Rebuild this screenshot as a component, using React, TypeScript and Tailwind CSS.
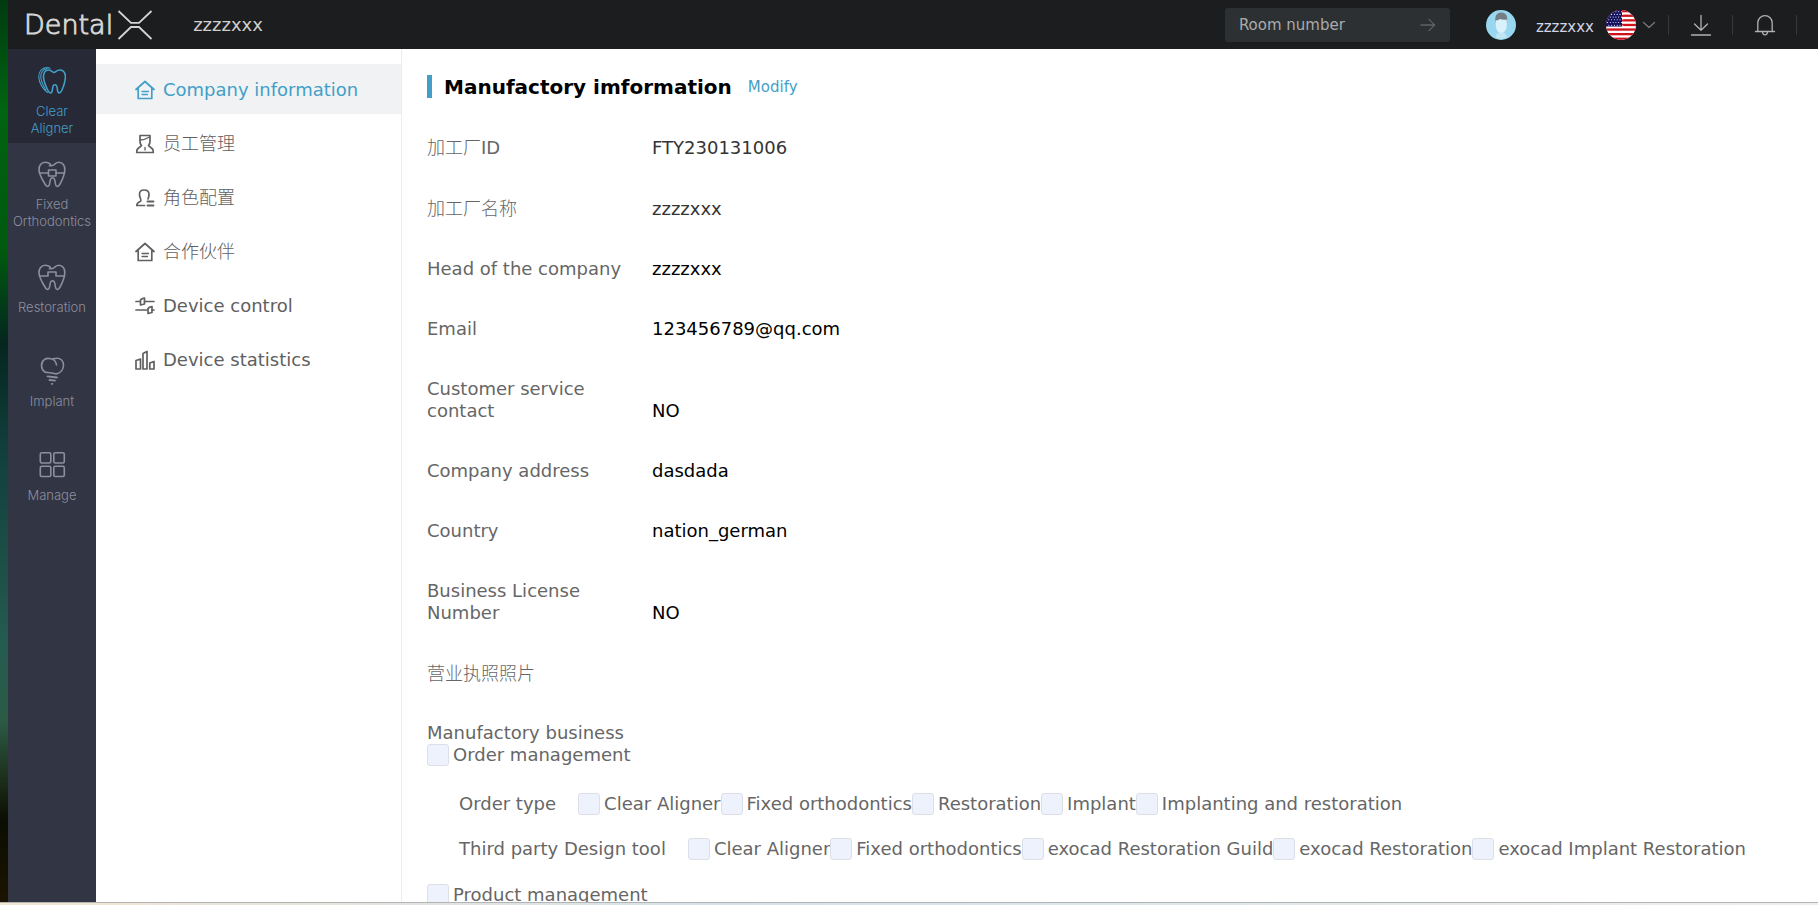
import type { ReactNode } from 'react';
import clsx from 'clsx';

const TOOTH =
  'M11.5 5.6c1.6.4 3 .2 4.300-.8C17.300 3.400 18.800 2.300 20.800 2.300c4 0 6.200 3.400 6 7.700-.3 5-2.300 9.400-4.300 13.200-1 2-1.900 3.300-3.200 3.300-1.700 0-1.900-2-2.100-4.200-.3-2.500-.9-4.500-2.700-4.500s-2.400 2-2.700 4.500c-.2 2.200-.4 4.200-2.100 4.200-1.300 0-2.200-1.300-3.200-3.300C4.300 19.400 1.300 15 1 10 .8 5.700 3.200 2.300 7.200 2.300c2.300 0 3.900.8 5.200 1.900';

function LineIcon({ size, view, children, width = 1.7 }: { size: string; view: string; children: ReactNode; width?: number }) {
  return (
    <svg
      className={size}
      viewBox={view}
      fill="none"
      stroke="currentColor"
      strokeWidth={width}
      strokeLinecap="round"
      strokeLinejoin="round"
      aria-hidden="true"
    >
      {children}
    </svg>
  );
}

const modules: { label: string; active?: boolean; icon: ReactNode }[] = [
  {
    label: 'Clear Aligner',
    active: true,
    icon: (
      <>
        <path d="M16 5.500c1.500-.4 3-2.500 6-2.500 3.600 0 5.600 3.300 5.400 7.300-.2 4.700-1.800 9-3.400 12.700-.9 2-1.700 3-2.800 3-1.600 0-1.700-1.900-1.900-4-.2-2.400-.7-4.200-2.400-4.200s-2.200 1.800-2.400 4.200c-.2 2.100-.3 4-1.900 4-1.100 0-2-1-2.900-3C8 19.500 5.700 15 5.500 10.300 5.300 6.300 7 3 10.500 3c2.500 0 3.500 2 5.500 2.500z" />
        <path d="M7.500 22.500C5.500 18.500 3 15 2.800 10.300 2.600 5.500 5 2.500 9 1.800" strokeWidth="1.100" />
        <path d="M9.500 25.500C5.500 22.500 1 16.500.8 10.300.6 4.500 3.800.8 9 .6c1.200 0 2 .2 3 .6" strokeWidth="1.100" />
      </>
    ),
  },
  {
    label: 'Fixed Orthodontics',
    icon: (
      <>
        <path d={TOOTH} />
        <rect x="10.500" y="10" width="7.500" height="6" />
        <path d="M1.500 13h9M18 13h8.500" />
      </>
    ),
  },
  {
    label: 'Restoration',
    icon: (
      <>
        <path d={TOOTH} />
        <path d="M1.500 13H10V9h8v4h8.500" />
      </>
    ),
  },
  {
    label: 'Implant',
    icon: (
      <>
        <path d="M12.500 1.800C8 .2 3.500 3.500 3.500 8.500c0 2.800 1.500 5 3.500 6.600 3.500.5 8 .9 11.500 1.800 4.500-1 7-5 7-9 0-4.500-3.500-7-7-6.600-2.200.2-3.500 1-6 .5 2.800.4 5.500 2.700 6 6.200" />
        <path d="M9.500 19.300l9.500 1.200M11.500 23l5.500.6M13.800 26.800h.6" strokeWidth="1.800" />
      </>
    ),
  },
  {
    label: 'Manage',
    icon: (
      <>
        <rect x="2.300" y="1.800" width="10.500" height="10.200" rx="1.500" />
        <rect x="15.800" y="1.800" width="10.500" height="10.200" rx="1.500" />
        <rect x="2.300" y="15.300" width="10.500" height="10.200" rx="1.500" />
        <rect x="15.800" y="15.300" width="10.500" height="10.200" rx="1.500" />
      </>
    ),
  },
];

const house = (
  <>
    <path d="M1 9.500L10 1.500l9 8M3.200 8.500v10h13.600v-10" />
    <path d="M7 11.500h6.500M7 14.500h5.500" strokeWidth="1.300" />
  </>
);

const menu: { label: string; active?: boolean; cjk?: boolean; icon: ReactNode }[] = [
  { label: 'Company information', active: true, icon: house },
  {
    label: '员工管理',
    cjk: true,
    icon: (
      <>
        <path d="M5 1.500h10v6c0 2-.8 3-1.500 4.200L17.500 15c.6.500.8 1.500.8 3.500H1.700c0-2 .2-3 .8-3.500l4-3.300C5.800 10.500 5 9.500 5 7.500z" />
        <path d="M5 6c3 0 6-.8 9.500-3M10 13.500v2.500" strokeWidth="1.300" />
      </>
    ),
  },
  {
    label: '角色配置',
    cjk: true,
    icon: (
      <>
        <path d="M9.500 17.500H1.800c0-2 .5-3 3.400-4 1.300-.6.800-1.500.3-3C4.800 9 4.500 8 4.500 6.500c0-3 1-4.500 4.700-4.500S14 3.500 14 6.500c0 2-.5 3-1 4.500" />
        <path d="M12.500 13.500h6M12.500 17.500h6" strokeWidth="1.800" />
      </>
    ),
  },
  { label: '合作伙伴', cjk: true, icon: house },
  {
    label: 'Device control',
    icon: (
      <>
        <path d="M1 5.500h4M9.500 5.500h9.500M1 14h11M17 14h2" />
        <path d="M7.500 2.500L9.500 2v6l-4 1V4zM15 11l2-.5v6l-4 1v-5z" />
      </>
    ),
  },
  {
    label: 'Device statistics',
    icon: <path d="M1 10.500l4.500-1.500v10H1zM8 3.500l4-2V19H8zM14.800 13l4.200-1.500V19h-4.200z" />,
  },
];

const details: { label: string; value?: string; cjk?: boolean; soft?: boolean }[] = [
  { label: '加工厂ID', value: 'FTY230131006', cjk: true, soft: true },
  { label: '加工厂名称', value: 'zzzzxxx', cjk: true, soft: true },
  { label: 'Head of the company', value: 'zzzzxxx' },
  { label: 'Email', value: '123456789@qq.com' },
  { label: 'Customer service contact', value: 'NO' },
  { label: 'Company address', value: 'dasdada' },
  { label: 'Country', value: 'nation_german' },
  { label: 'Business License Number', value: 'NO' },
  { label: '营业执照照片', cjk: true },
];

const groups = [
  {
    title: 'Order type',
    options: ['Clear Aligner', 'Fixed orthodontics', 'Restoration', 'Implant', 'Implanting and restoration'],
  },
  {
    title: 'Third party Design tool',
    options: [
      'Clear Aligner',
      'Fixed orthodontics',
      'exocad Restoration Guild',
      'exocad Restoration',
      'exocad Implant Restoration',
    ],
  },
];

function Check({ label }: { label: string }) {
  return (
    <label className="flex shrink-0 items-center gap-1 whitespace-nowrap">
      <input
        type="checkbox"
        className="size-[22px] shrink-0 appearance-none rounded-[3px] border border-[#dcdfe6] bg-[#edf2fc] checked:bg-[#439fc8]"
      />
      {label}
    </label>
  );
}

function Logo() {
  return (
    <a href="#home" aria-label="DentalX" className="flex items-center gap-1 text-[#d4d4d4]">
      <span className="text-[27px] leading-[30px] font-extralight [-webkit-text-stroke:1px]">Dental</span>
      <svg className="h-[30px] w-[36px]" viewBox="0 0 36 30" fill="none" stroke="currentColor" strokeWidth="1.800" aria-hidden="true">
        <path d="M1.500 1l12.500 11.800h8L34.500 1M1.500 29L14 17h8L34.500 29" />
      </svg>
    </a>
  );
}

function Avatar() {
  return (
    <svg className="size-[30px] shrink-0" viewBox="0 0 30 30" role="img" aria-label="Avatar">
      <circle cx="15" cy="15" r="15" fill="#98d7ef" />
      <path d="M9.500 27.800c.3-3 1.500-4.300 3.500-5.300h4.500c2 1 3 2.300 3.300 5.300a15 15 0 0 1-11.300 0z" fill="#bfe5f3" />
      <path d="M9.300 9.500c0-5 2.500-7 6-7s6 2 6 7l-.6 3.500H9.900z" fill="#737f84" />
      <path d="M9.800 10.500c2 0 3-.8 4-1.500 2 .8 4.500.8 7 .5v6c0 4-2.500 7.500-5.500 7.500s-5.500-3.500-5.500-7.500z" fill="#d9f1fb" />
    </svg>
  );
}

function Flag() {
  const stripes = [0, 1, 2, 3, 4, 5, 6];
  const stars = [0, 1, 2, 3, 4, 5];
  return (
    <svg className="size-[30px]" viewBox="0 0 30 30" role="img" aria-label="United States">
      <defs>
        <clipPath id="flag-round">
          <circle cx="15" cy="15" r="15" />
        </clipPath>
      </defs>
      <g clipPath="url(#flag-round)">
        <rect width="30" height="30" fill="#fff" />
        {stripes.map((i) => (
          <rect key={i} y={i * 4.6} width="30" height="2.300" fill="#d0101b" />
        ))}
        <rect width="16" height="16.500" fill="#13125f" />
        {stars.map((r) =>
          stars.map((c) => <circle key={`${r}-${c}`} cx={1.5 + c * 2.8 + (r % 2) * 1.3} cy={1.7 + r * 2.7} r="0.550" fill="#fff" />),
        )}
      </g>
    </svg>
  );
}

export default function App() {
  return (
    <div className="flex h-screen flex-col overflow-hidden bg-white font-['DejaVu_Sans','Noto_Sans_CJK_SC',sans-serif] text-[18px] leading-[22px]">
      <div className="flex min-h-0 flex-1">
        <div className="w-2 shrink-0 bg-linear-[180deg,#003a10_0%,#006411_12%,#00590f_28%,#04261f_38%,#123f3c_50%,#255c50_72%,#2b5a45_80%,#1b2a16_87%,#0b0d02_91%,#1b1400_100%]" />
        <div className="flex min-w-0 flex-1 flex-col">
          <header className="flex h-[49px] shrink-0 items-center bg-[#1c1d1e] pr-[21px] pl-4">
            <Logo />
            <span className="ml-10 text-[#cfcfcf]">zzzzxxx</span>
            <form className="mr-9 ml-auto flex h-[34px] w-[225px] items-center rounded-[3px] bg-[#2d3032] px-3.5">
              <input
                type="text"
                aria-label="Room number"
                placeholder="Room number"
                className="min-w-0 flex-1 bg-transparent text-[15px] text-white outline-none placeholder:text-[#a9abac]"
              />
              <button type="button" aria-label="Enter room" className="text-[#7a7c7e]">
                <LineIcon size="size-4" view="0 0 18 18" width={1.1}>
                  <path d="M1 9h15M10 2.500L16.300 9 10 15.500" />
                </LineIcon>
              </button>
            </form>
            <div className="flex items-center">
              <Avatar />
              <span className="mr-3 ml-5 pt-1 text-[15px] text-[#d3d4e6]">zzzzxxx</span>
              <button type="button" aria-label="Language" className="flex items-center gap-1.5 text-[#7a7c7e]">
                <Flag />
                <LineIcon size="size-3.5" view="0 0 14 14" width={1.2}>
                  <path d="M1.500 4.500L7 9.500l5.500-5" />
                </LineIcon>
              </button>
            </div>
            <div className="ml-3 flex h-5 items-center text-[#b0b1b2]">
              <span className="h-full w-px bg-[#36383a]" />
              <button type="button" aria-label="Download" className="flex w-[63px] justify-center">
                <LineIcon size="size-[22px]" view="0 0 22 22" width={1.3}>
                  <path d="M11 1.500v14.500M4.500 10L11 16.300 17.500 10M1.500 21h19" />
                </LineIcon>
              </button>
              <span className="h-full w-px bg-[#36383a]" />
              <button type="button" aria-label="Notifications" className="flex w-[63px] justify-center">
                <LineIcon size="size-[22px]" view="0 0 22 22" width={1.3}>
                  <path d="M1.500 17.500h19M3.800 17.500V8.800a7.200 7.200 0 0 1 14.400 0v8.700M8.500 18c.3 3.800 4.700 3.800 5 0" />
                </LineIcon>
              </button>
              <span className="h-full w-px bg-[#36383a]" />
            </div>
          </header>

          <div className="flex min-h-0 flex-1">
            <nav aria-label="Modules" className="flex w-[88px] shrink-0 flex-col bg-[#323544] font-[Inter,sans-serif] text-[13px] leading-[17px] font-light">
              {modules.map((m) => (
                <a
                  key={m.label}
                  href="#module"
                  className={clsx(
                    'flex h-[94px] shrink-0 flex-col items-center justify-center gap-2 px-1 text-center',
                    m.active ? 'bg-[#272a36] pt-3 text-[#439fc8]' : 'pt-2.5 text-[#8c8f9e]',
                  )}
                >
                  <LineIcon size="size-7" view="0 0 28 28" width={1.6}>
                    {m.icon}
                  </LineIcon>
                  <span className={m.active ? 'w-14' : undefined}>{m.label}</span>
                </a>
              ))}
            </nav>

            <nav aria-label="Settings" className="flex w-[306px] shrink-0 flex-col gap-1 border-r border-[#ececee] pt-[15px]">
              {menu.map((m) => (
                <a
                  key={m.label}
                  href="#settings"
                  className={clsx(
                    'flex h-[50px] items-center gap-2 pt-px pl-[39px]',
                    m.active ? 'bg-[#f0f2f4] text-[#439fc8]' : 'text-[#606060]',
                  )}
                >
                  <LineIcon size="size-5" view="0 0 20 20">
                    {m.icon}
                  </LineIcon>
                  <span className={clsx(m.cjk && 'font-light')}>{m.label}</span>
                </a>
              ))}
            </nav>

            <main className="min-w-0 flex-1 overflow-hidden pt-[26px] pl-[25px] text-[#666666]">
              <div className="flex items-center">
                <span className="mr-3 h-[23px] w-[5px] bg-[#439fc8]" />
                <h1 className="text-[20px] font-bold text-black">Manufactory imformation</h1>
                <button type="button" className="ml-4 text-[15px] text-[#439fc8]">
                  Modify
                </button>
              </div>

              <dl className="mt-[38px] flex flex-col gap-[38px]">
                {details.map((d) => (
                  <div key={d.label} className={clsx('flex items-end', d.cjk && 'leading-[23px]')}>
                    <dt className="w-[225px] shrink-0 pr-7">
                      {d.cjk ? (
                        <>
                          <span className="font-light">{d.label.replace('ID', '')}</span>
                          {d.label.includes('ID') && 'ID'}
                        </>
                      ) : (
                        d.label
                      )}
                    </dt>
                    <dd className={d.soft ? 'text-[#333333]' : 'text-black'}>{d.value}</dd>
                  </div>
                ))}
              </dl>

              <section className="mt-[37px] flex flex-col items-start">
                <h2>Manufactory business</h2>
                <Check label="Order management" />
                <div className="mt-[27px] flex flex-col gap-[23px] pl-8">
                  {groups.map((g) => (
                    <fieldset key={g.title} className="flex items-center">
                      <legend className="float-left mr-[22px] whitespace-nowrap">{g.title}</legend>
                      {g.options.map((o) => (
                        <Check key={o} label={o} />
                      ))}
                    </fieldset>
                  ))}
                </div>
                <div className="mt-6">
                  <Check label="Product management" />
                </div>
              </section>
            </main>
          </div>
        </div>
      </div>
      <div className="h-[3px] shrink-0 border-t border-[#b3b5b5] bg-linear-to-r from-[#f3e6d2] via-[#d5e2ea] via-40% to-[#eeeeec]" />
    </div>
  );
}
